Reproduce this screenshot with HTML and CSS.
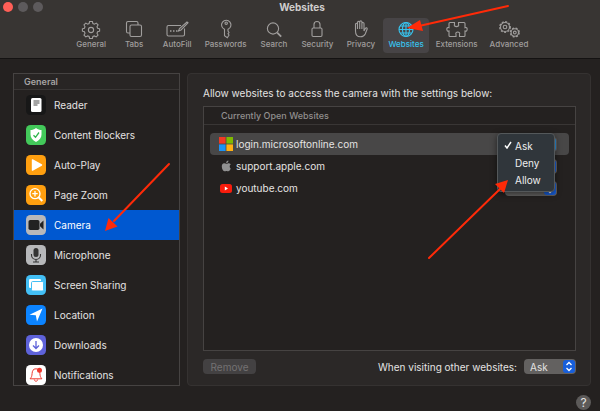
FILE: index.html
```html
<!DOCTYPE html>
<html lang="en">
<head>
<meta charset="utf-8">
<title>Websites</title>
<link rel="stylesheet" href="styles.css">
</head>
<body>
<header class="titlebar">
  <div class="lights"><span class="light light-close"></span><span class="light"></span><span class="light"></span></div>
  <h1 class="title">Websites</h1>
  <nav class="toolbar">
    <button class="tool" type="button">
      <svg class="tool-icon" viewBox="0 0 24 18"><path d="M10.6 1.5h2.8l.5 2 1.5.7 1.9-1.1 1.8 1.8-1.1 1.9.6 1.4 2 .6v2.4l-2 .6-.6 1.5 1 1.8-1.8 1.8-1.9-1-1.4.6-.5 2h-2.8l-.5-2-1.4-.6-1.9 1L5 15.100l1-1.800-.6-1.500-2-.600V8.800l2-.600.6-1.400-1-1.900 1.800-1.800 1.900 1.100 1.400-.700z"/><circle cx="12" cy="10" r="2.600"/></svg>
      <span>General</span></button>
    <button class="tool" type="button">
      <svg class="tool-icon" viewBox="0 0 24 18"><path d="M8 13H6a1.500 1.500 0 0 1-1.500-1.500V3A1.500 1.500 0 0 1 6 1.500h8.500A1.500 1.500 0 0 1 16 3v2"/><rect x="8" y="5" width="11.500" height="11.500" rx="1.500"/></svg>
      <span>Tabs</span></button>
    <button class="tool" type="button">
      <svg class="tool-icon" viewBox="0 0 24 18"><path d="M16 5.500H3.500a1.500 1.500 0 0 0-1.500 1.500v7.500A1.500 1.500 0 0 0 3.500 16h14.500a1.500 1.500 0 0 0 1.500-1.500V8.500M13.500 11l1-2.500L22 2l1 .8-7 7.200z"/><path class="dots" d="M5 11h1.500M8 11h1.500M11 11h1.500"/></svg>
      <span>AutoFill</span></button>
    <button class="tool" type="button">
      <svg class="tool-icon" viewBox="0 0 24 18"><path d="M10.500 9.300a4.700 4.700 0 1 1 3.500 0V11l1 1.500-1 1.300 1 1.200-1.700 2.700-2.800-2z"/><circle cx="12.200" cy="3.200" r="1.200"/></svg>
      <span>Passwords</span></button>
    <button class="tool" type="button">
      <svg class="tool-icon" viewBox="0 0 24 18"><circle cx="11" cy="8.500" r="5.600"/><path class="heavy" d="m15.200 12.700 4 4"/></svg>
      <span>Search</span></button>
    <button class="tool" type="button">
      <svg class="tool-icon" viewBox="0 0 24 18"><rect x="7" y="8" width="10" height="8.500" rx="1.200"/><path d="M9 8V4.500a3 3 0 0 1 6 0V8"/></svg>
      <span>Security</span></button>
    <button class="tool" type="button">
      <svg class="tool-icon" viewBox="0 0 24 18"><path d="M6.500 11V4.200a1 1 0 0 1 2 0V9 2.500a1 1 0 0 1 2.200 0V9 2a1 1 0 0 1 2.200 0V9 3.500a1 1 0 0 1 2.100 0V11l1.300-2.500c.7-1.200 2.200-.6 1.900.5l-2 5c-1 2.200-2.700 2.800-4.700 2.800-3.300 0-5-1.800-5-5.800z"/></svg>
      <span>Privacy</span></button>
    <button class="tool tool-active" type="button" aria-pressed="true">
      <svg class="tool-icon" viewBox="0 0 24 18"><circle cx="12" cy="9.500" r="7"/><ellipse cx="12" cy="9.500" rx="3.500" ry="7"/><path d="M12 2.500v14M5 9.500h14M6.200 6h11.600M6.200 13h11.600"/></svg>
      <span>Websites</span>
      <svg class="arrow arrow-toolbar" viewBox="0 0 110 36" aria-hidden="true"><path d="M107 6 18 26"/><path class="head" d="m6 28 13-8 3 11z"/></svg></button>
    <button class="tool" type="button">
      <svg class="tool-icon" viewBox="0 0 24 18"><path d="M4 3.500a1 1 0 0 1 1-1h4.500v1.700c-1.700 3.200 5.700 3.200 4 0V2.500H19a1 1 0 0 1 1 1v4.200c2.900-1.500 2.900 4.500 0 3.300v4.500a1 1 0 0 1-1 1h-4.500v-2.200c1.500-3-5-3-3.500 0v2.200H5a1 1 0 0 1-1-1V11c-2.900 1.200-2.900-4.800 0-3.300z"/></svg>
      <span>Extensions</span></button>
    <button class="tool" type="button">
      <svg class="tool-icon" viewBox="0 0 24 18"><circle class="cog" cx="8" cy="7" r="5.300"/><circle cx="8" cy="7" r="4.500"/><circle cx="8" cy="7" r="1.800"/><circle class="cog" cx="17.800" cy="12.500" r="4.400"/><circle cx="17.800" cy="12.500" r="3.700"/><circle cx="17.800" cy="12.500" r="1.400"/></svg>
      <span>Advanced</span></button>
  </nav>
</header>

<main class="content">
  <aside class="sidebar">
    <h2 class="sidebar-head">General</h2>
    <ul class="categories">
      <li class="category"><svg class="app" viewBox="0 0 20 20"><rect width="20" height="20" rx="4.500" fill="#171717"/><rect x="5" y="3" width="10.500" height="14" rx="1.500" fill="#fff"/><path d="M7.500 6h6M7.500 8h6M7.500 10h4" stroke="#333" stroke-width=".9"/></svg>Reader</li>
      <li class="category"><svg class="app" viewBox="0 0 20 20"><rect width="20" height="20" rx="4.500" fill="#43c95a"/><path d="M10 3c2 1.500 3.500 2 5.500 2v4.500c0 3.500-2 5.500-5.500 7.500-3.500-2-5.500-4-5.500-7.500V5c2 0 3.500-.5 5.500-2z" fill="#fff"/><path d="m7.500 10.300 2 2L13 7.500" fill="none" stroke="#2db44c" stroke-width="1.300"/></svg>Content Blockers</li>
      <li class="category"><svg class="app" viewBox="0 0 20 20"><rect width="20" height="20" rx="4.500" fill="#ff9f0f"/><path d="M5.800 4.800v10.400c0 .6.500.8 1 .5l9-5c.6-.4.6-1 0-1.400l-9-5c-.5-.3-1-.1-1 .5z" fill="#fff"/></svg>Auto-Play</li>
      <li class="category"><svg class="app" viewBox="0 0 20 20"><rect width="20" height="20" rx="4.500" fill="#ff9f0f"/><g fill="none" stroke="#fff" stroke-width="1.300"><circle cx="9" cy="8.700" r="5"/><path d="M9 6v5.400M6.300 8.700h5.400"/><path d="m12.800 12.500 3.500 3.500" stroke-width="2"/></g></svg>Page Zoom</li>
      <li class="category category-active"><svg class="app" viewBox="0 0 20 20"><rect width="20" height="20" rx="4.500" fill="#b7b8ba"/><rect x="2.500" y="5" width="11" height="10" rx="1.800" fill="#222"/><path d="M14 8.700 17.500 5.500v9L14 11.300z" fill="#222"/></svg>Camera
        <svg class="arrow arrow-category" viewBox="0 0 74 78" aria-hidden="true"><path d="M69 6 14 63"/><path class="head" d="m5 73 3.500-13 9 8.500z"/></svg></li>
      <li class="category"><svg class="app" viewBox="0 0 20 20"><rect width="20" height="20" rx="4.500" fill="#b7b8ba"/><rect x="7.500" y="3" width="5" height="9" rx="2.500" fill="#333"/><path d="M5.500 9v1a4.500 4.500 0 0 0 9 0V9M10 14.500V17M7 17h6" fill="none" stroke="#333" stroke-width="1.100"/></svg>Microphone</li>
      <li class="category"><svg class="app" viewBox="0 0 20 20"><rect width="20" height="20" rx="4.500" fill="#43bff5"/><rect x="3" y="4" width="12" height="9" rx="1.200" fill="#fff"/><rect x="5.500" y="6.500" width="12" height="9.500" rx="1.200" fill="#fff" stroke="#43bff5"/></svg>Screen Sharing</li>
      <li class="category"><svg class="app" viewBox="0 0 20 20"><rect width="20" height="20" rx="4.500" fill="#0c84ff"/><path d="M16.500 3.500 11 16.500 9.800 10.200 3.500 9.700z" fill="#fff"/></svg>Location</li>
      <li class="category"><svg class="app" viewBox="0 0 20 20"><rect width="20" height="20" rx="4.500" fill="#5e62d9"/><circle cx="10" cy="10" r="7" fill="#fff"/><path d="M10 6v7M7 10.500l3 3 3-3" fill="none" stroke="#5e62d9" stroke-width="1.300"/></svg>Downloads</li>
      <li class="category"><svg class="app" viewBox="0 0 20 20"><rect width="20" height="20" rx="4.500" fill="#fff"/><path d="M10 3.800c-3 0-3.700 2.200-3.900 4.700-.2 2.700-.6 3.700-2 5.300h11.800c-1.400-1.600-1.800-2.600-2-5.300C13.700 6 13 3.800 10 3.800zM8.300 14.500c.2 2.300 3.200 2.300 3.400 0" fill="none" stroke="#f0392f"/><circle cx="13.500" cy="5.300" r="2.500" fill="#f0392f"/></svg>Notifications</li>
    </ul>
  </aside>

  <section class="panel">
    <p class="intro">Allow websites to access the camera with the settings below:</p>
    <div class="sites">
      <h2 class="sites-head">Currently Open Websites</h2>
      <ul class="site-list">
        <li class="site site-active">
          <svg class="favicon" viewBox="0 0 14 14"><path fill="#f03a24" d="M0 0h6.600v6.600H0z"/><path fill="#7fba00" d="M7.400 0H14v6.600H7.400z"/><path fill="#1b93f5" d="M0 7.400h6.600V14H0z"/><path fill="#ffb013" d="M7.400 7.400H14V14H7.400z"/></svg>
          <label class="site-name" for="site-1">login.microsoftonline.com</label>
          <span class="picker picker-live"><select id="site-1"><option>Ask</option><option>Deny</option><option>Allow</option></select><svg class="chevrons" viewBox="0 0 12 13"><path d="m3.500 5 2.500-2.500L8.500 5M3.500 8 6 10.500 8.500 8"/></svg></span>
          <div class="menu" role="menu">
            <button class="menu-item" type="button" role="menuitemradio" aria-checked="true"><svg class="check" viewBox="0 0 8 8"><path d="m1 4.500 2 2.500L7 1"/></svg>Ask</button>
            <button class="menu-item" type="button" role="menuitemradio" aria-checked="false">Deny</button>
            <button class="menu-item" type="button" role="menuitemradio" aria-checked="false">Allow</button>
            <svg class="arrow arrow-menu" viewBox="0 0 88 86" aria-hidden="true"><path d="M5 82 76 13"/><path class="head" d="m84 4-4 13-9-9z"/></svg>
          </div>
        </li>
        <li class="site">
          <svg class="favicon" viewBox="0 0 14 14"><path fill="#929292" d="M10.700 7.400c0-1.200.9-1.800 1-1.900-.9-1.300-2.300-1.200-2.800-1.100-.7.200-1.200.4-1.600.4-.5 0-1.200-.5-2-.5C3.500 4.400 2.700 6 2.800 7.700c.1 2.400 1.600 4.600 2.800 4.600.6 0 1-.4 1.800-.4s1.100.4 1.800.4c1.200 0 2.300-1.900 2.600-2.800-.1 0-1.100-.6-1.100-2.100zM8.700 3.500c.5-.6.800-1.300.7-2.100-1.300.1-2.400 1.300-2.200 2.700.6 0 1.200-.2 1.500-.6z"/></svg>
          <label class="site-name" for="site-2">support.apple.com</label>
          <span class="picker"><select id="site-2"><option>Ask</option><option>Deny</option><option>Allow</option></select><svg class="chevrons" viewBox="0 0 12 13"><path d="m3.500 5 2.500-2.500L8.500 5M3.500 8 6 10.500 8.500 8"/></svg></span>
        </li>
        <li class="site">
          <svg class="favicon" viewBox="0 0 14 14"><rect x="1" y="3" width="12" height="9" rx="2.500" fill="#f91c0c"/><path d="M5.800 5.600v3.800L9 7.500z" fill="#fff"/></svg>
          <label class="site-name" for="site-3">youtube.com</label>
          <span class="picker"><select id="site-3"><option>Ask</option><option>Deny</option><option>Allow</option></select><svg class="chevrons" viewBox="0 0 12 13"><path d="m3.500 5 2.500-2.500L8.500 5M3.500 8 6 10.500 8.500 8"/></svg></span>
        </li>
      </ul>
    </div>
    <div class="actions">
      <button class="remove" type="button" disabled>Remove</button>
      <label class="default-label" for="default">When visiting other websites:</label>
      <span class="picker"><select id="default"><option>Ask</option><option>Deny</option><option>Allow</option></select><svg class="chevrons" viewBox="0 0 12 13"><path d="m3.500 5 2.500-2.500L8.500 5M3.500 8 6 10.500 8.500 8"/></svg></span>
    </div>
  </section>
</main>

<footer class="footer"><button class="help" type="button" aria-label="Help">?</button></footer>
</body>
</html>
```
FILE: styles.css
```css
* {
  box-sizing: border-box;
}

body {
  margin: 0;
  height: 100vh;
  display: flex;
  flex-direction: column;
  background: #242120;
  color: #e4e3e2;
  font: 10px/14px Inter, "Liberation Sans", sans-serif;
}

h1, h2, p, ul {
  margin: 0;
  padding: 0;
}

ul {
  list-style: none;
}

button, select {
  margin: 0;
  padding: 0;
  border: 0;
  font: inherit;
  color: inherit;
}

/* Title bar and toolbar */
.titlebar {
  position: relative;
  padding: 0 0 5px 4px;
  background: #383533;
  border-bottom: 1px solid #141212;
}

.lights {
  position: absolute;
  top: 2px;
  left: 3px;
  display: flex;
  gap: 5px;
}

.light {
  width: 10px;
  height: 10px;
  border-radius: 50%;
  background: #5d5a5c;
}

.light-close {
  background: #ff5f57;
}

.title {
  padding: 0 0 4px;
  text-align: center;
  font-size: 10px;
  line-height: 14px;
  font-weight: 700;
  color: #cfcdcc;
}

.toolbar {
  display: flex;
  justify-content: center;
  gap: 2px;
}

.tool {
  position: relative;
  min-width: 41px;
  height: 35px;
  padding: 2px 5px 0;
  display: flex;
  flex-direction: column;
  align-items: center;
  border-radius: 4px;
  background: none;
  color: #a09e9d;
  font-size: 8px;
  line-height: 12px;
  font-weight: 500;
}

.tool-active {
  background: #474446;
  color: #37c3ee;
}

.tool-icon {
  width: 24px;
  height: 18px;
  fill: none;
  stroke: currentColor;
  stroke-width: 1.1;
  overflow: visible;
}

.heavy {
  stroke-width: 1.8;
}

.dots {
  stroke-width: 1.5;
}

.cog {
  stroke-width: 1.3;
  stroke-dasharray: 2 1.5;
}

/* Annotation arrows */
.arrow {
  position: absolute;
  z-index: 5;
  fill: none;
  stroke: #ff2a08;
  stroke-width: 2;
  stroke-linecap: round;
  pointer-events: none;
}

.head {
  fill: #ff2a08;
  stroke: none;
}

.arrow-toolbar {
  width: 110px;
  height: 36px;
  left: 18px;
  top: -18px;
}

.arrow-category {
  width: 74px;
  height: 78px;
  left: 86px;
  top: -52px;
}

.arrow-menu {
  width: 88px;
  height: 86px;
  right: 42px;
  top: 42px;
}

/* Content */
.content {
  flex: 1;
  min-height: 0;
  display: grid;
  grid-template-columns: 167px 1fr;
  gap: 7px;
  padding: 14px 9px 0 13px;
}

.sidebar {
  min-height: 0;
  overflow: hidden;
  border: 1px solid #464342;
}

.sidebar-head {
  height: 16px;
  padding-left: 10px;
  border-bottom: 1px solid #393635;
  background: #282524;
  color: #a5a3a2;
  font-size: 9px;
  line-height: 15px;
  font-weight: 600;
}

.category {
  position: relative;
  height: 30px;
  padding-left: 12px;
  display: flex;
  align-items: center;
  gap: 8px;
}

.category-active {
  background: #0058d0;
  color: #fff;
}

.app {
  width: 20px;
  height: 20px;
}

.panel {
  min-width: 0;
  min-height: 0;
  display: flex;
  flex-direction: column;
  padding: 12px 14px 11px 15px;
  border: 1px solid #353231;
  border-radius: 4px;
  background: #2b2827;
}

.intro {
  margin-bottom: 6px;
}

.sites {
  flex: 1;
  border: 1px solid #464342;
  background: #242120;
}

.sites-head {
  height: 18px;
  padding-left: 17px;
  border-bottom: 1px solid #393635;
  color: #918f8e;
  font-size: 9px;
  line-height: 18px;
  font-weight: 500;
}

.site-list {
  padding: 8px 6px 0;
}

.site {
  position: relative;
  height: 22px;
  padding: 0 12px 0 9px;
  display: flex;
  align-items: center;
  gap: 3px;
  border-radius: 4px;
}

.site-active {
  background: #484747;
}

.favicon {
  width: 14px;
  height: 14px;
}

.site-name {
  flex: 1;
}

/* Pop-up selects */
.picker {
  position: relative;
  width: 52px;
  height: 15px;
}

.picker select {
  display: block;
  width: 100%;
  height: 100%;
  padding-left: 6px;
  appearance: none;
  border-radius: 4px;
  background: #636160;
}

.chevrons {
  position: absolute;
  top: 1px;
  right: 1px;
  width: 12px;
  height: 13px;
  border-radius: 3px;
  background: #175fdc;
  fill: none;
  stroke: #fff;
  stroke-width: 1.3;
  pointer-events: none;
}

.picker-live .chevrons {
  background: #2b92df;
}

.menu {
  position: absolute;
  z-index: 3;
  top: 0;
  right: 14px;
  width: 58px;
  padding: 3px 0;
  border: 1px solid #54585a;
  border-radius: 4px;
  background: #30363b;
  box-shadow: 0 2px 6px #0008;
}

.menu-item {
  position: relative;
  display: block;
  width: 100%;
  height: 17px;
  padding-left: 17px;
  background: none;
  color: #eee;
  text-align: left;
}

.check {
  position: absolute;
  left: 6px;
  top: 4px;
  width: 8px;
  height: 8px;
  fill: none;
  stroke: #fff;
  stroke-width: 1.5;
}

.actions {
  display: flex;
  align-items: center;
  gap: 7px;
  padding-top: 8px;
}

.remove {
  width: 53px;
  height: 15px;
  border-radius: 4px;
  background: #434142;
  color: #737172;
}

.default-label {
  margin-left: auto;
}

/* Footer */
.footer {
  height: 25px;
  padding: 9px 9px 0 0;
  display: flex;
  justify-content: flex-end;
}

.help {
  width: 15px;
  height: 15px;
  border-radius: 50%;
  background: #5c5a59;
  font-size: 12px;
  line-height: 15px;
}
```
